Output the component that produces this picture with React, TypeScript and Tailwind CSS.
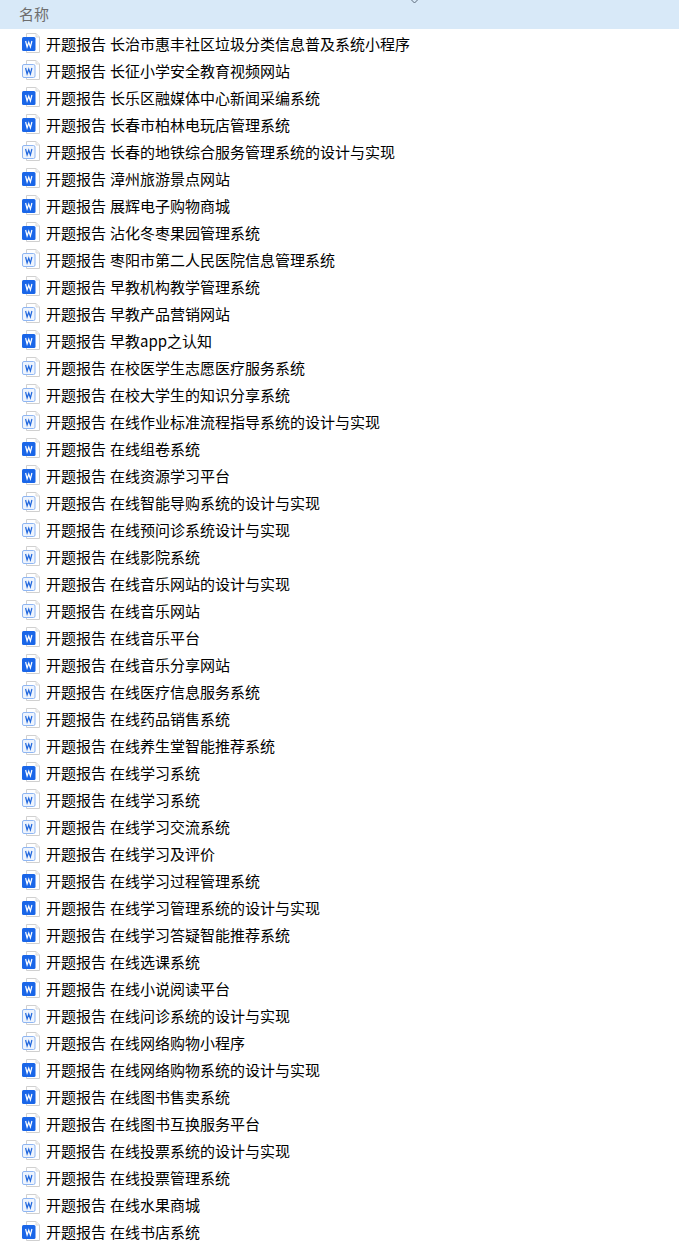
const rows: [string, number][] = [
  ["长治市惠丰社区垃圾分类信息普及系统小程序", 1],
  ["长征小学安全教育视频网站", 0],
  ["长乐区融媒体中心新闻采编系统", 1],
  ["长春市柏林电玩店管理系统", 1],
  ["长春的地铁综合服务管理系统的设计与实现", 0],
  ["漳州旅游景点网站", 1],
  ["展辉电子购物商城", 1],
  ["沾化冬枣果园管理系统", 1],
  ["枣阳市第二人民医院信息管理系统", 0],
  ["早教机构教学管理系统", 1],
  ["早教产品营销网站", 0],
  ["早教app之认知", 1],
  ["在校医学生志愿医疗服务系统", 0],
  ["在校大学生的知识分享系统", 0],
  ["在线作业标准流程指导系统的设计与实现", 0],
  ["在线组卷系统", 1],
  ["在线资源学习平台", 1],
  ["在线智能导购系统的设计与实现", 0],
  ["在线预问诊系统设计与实现", 0],
  ["在线影院系统", 0],
  ["在线音乐网站的设计与实现", 0],
  ["在线音乐网站", 0],
  ["在线音乐平台", 1],
  ["在线音乐分享网站", 1],
  ["在线医疗信息服务系统", 0],
  ["在线药品销售系统", 0],
  ["在线养生堂智能推荐系统", 0],
  ["在线学习系统", 1],
  ["在线学习系统", 0],
  ["在线学习交流系统", 0],
  ["在线学习及评价", 0],
  ["在线学习过程管理系统", 1],
  ["在线学习管理系统的设计与实现", 1],
  ["在线学习答疑智能推荐系统", 1],
  ["在线选课系统", 1],
  ["在线小说阅读平台", 1],
  ["在线问诊系统的设计与实现", 0],
  ["在线网络购物小程序", 0],
  ["在线网络购物系统的设计与实现", 1],
  ["在线图书售卖系统", 1],
  ["在线图书互换服务平台", 1],
  ["在线投票系统的设计与实现", 0],
  ["在线投票管理系统", 0],
  ["在线水果商城", 0],
  ["在线书店系统", 1],
];

function WordIcon({ solid }: { solid: boolean }) {
  return (
    <svg width="20" height="21" viewBox="0 0 20 21" className="shrink-0 block">
      <path d="M5.5 0.5H15L18.5 4V19.5H5.5Z" fill="#ffffff" stroke="#d0d0d0" />
      <path d="M15 0.5V4H18.5" fill="#f0f0f0" stroke="#dcdcdc" />
      {solid ? (
        <rect x="1" y="4" width="13.5" height="14" rx="1.5" fill="#1a66e8" />
      ) : (
        <rect x="1.5" y="4.5" width="12.5" height="13" rx="1.5" fill="#eef4fd" stroke="#8fb6f2" />
      )}
      <path
        d="M4.6 8L6.1 14L7.75 9.2L9.4 14L10.9 8"
        fill="none"
        stroke={solid ? "#ffffff" : "#1f66dd"}
        strokeWidth="1.2"
      />
    </svg>
  );
}

export default function App() {
  return (
    <div className="relative h-[1241px] w-[679px] overflow-hidden bg-white font-['Noto_Sans_CJK_SC',sans-serif] text-[15px]">
      <div className="absolute left-[411px] top-0 h-[3px] w-[6px]">
        <svg width="7" height="4" viewBox="0 0 7 4" className="block">
          <path d="M0.5 0L3.5 3L6.5 0" fill="none" stroke="#5c6b7a" />
        </svg>
      </div>
      <div className="h-[29px] bg-[#d8e9f8] pl-[19px] leading-[27px] text-[#6d6d6d]">
        名称
      </div>
      <div className="flex flex-col pt-[1px]">
        {rows.map(([name, solid], i) => (
          <div key={i} className="flex h-[27px] items-center pl-[21px] text-black">
            <WordIcon solid={!!solid} />
            <span className="ml-[5px] whitespace-pre leading-[27px]">
              开题报告<span className="inline-block w-[4px]"></span>
              {name}
            </span>
          </div>
        ))}
      </div>
    </div>
  );
}
